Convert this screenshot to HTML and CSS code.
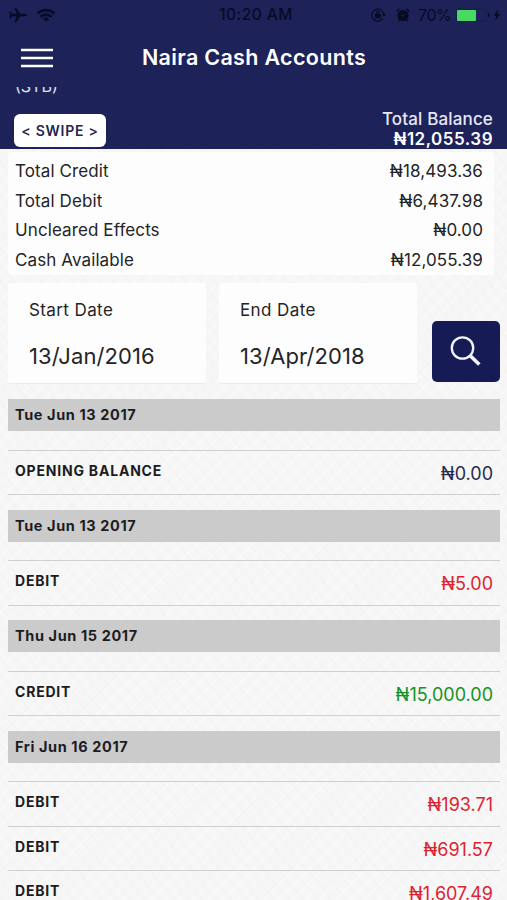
FILE: index.html
```html
<!DOCTYPE html>
<html lang="en">
<head>
<meta charset="utf-8">
<title>Naira Cash Accounts</title>
<link rel="stylesheet" href="styles.css">
</head>
<body>
<header class="top">
  <div class="status">
    <div class="status-left">
      <svg width="20" height="16" viewBox="0 0 20 16"><path d="M19 8c0-.8-1-1.200-2-1.200h-4.500L8 .8H6.300l2.200 6H4.200L2.500 4.600H1.100L2.200 8l-1.100 3.400h1.400l1.700-2.200h4.300l-2.200 6H8l4.500-6H17c1 0 2-.4 2-1.200z"/></svg>
      <svg width="20" height="14" viewBox="0 0 20 14" fill="none" stroke="#080b24" stroke-width="2.700"><path d="M1.500 5.500a12.300 12.300 0 0 1 17 0M4.600 8.900a7.700 7.700 0 0 1 10.800 0"/><path d="M10 13.800 7 11a4.300 4.300 0 0 1 6 0z" fill="#080b24" stroke="none"/></svg>
    </div>
    <span class="clock">10:20 AM</span>
    <div class="status-right">
      <svg width="16" height="14" viewBox="0 0 16 14" fill="none" stroke="#080b24" stroke-width="1.200"><path d="M12 10.200A6 6 0 1 1 12.700 6"/><path d="M11 6h4l-2.100 2.700z" fill="#080b24" stroke="none"/><path d="M4.600 6.500h4.600v3.200H4.600z" fill="#080b24"/><path d="M5.500 6V4.800a1.400 1.400 0 0 1 2.800 0V6"/></svg>
      <svg class="alarm" width="14" height="14" viewBox="0 0 14 14"><circle cx="7" cy="7.500" r="5.600"/><path d="M.6 4.500C.2 2 2 .4 4.500 1zM13.400 4.500C13.800 2 12 .4 9.500 1zM2.800 11.300l1.400 1-1.300 1.500-1-.8zM11.200 11.300l-1.400 1 1.300 1.500 1-.8z"/><path d="M9.300 5.200 7 8 5 7.300" fill="none" stroke="#1d2259" stroke-width=".8"/></svg>
      <span class="percent">70%</span>
      <svg class="battery" width="35" height="14" viewBox="0 0 35 14"><rect x=".5" y="1" width="30" height="12" rx="2" fill="none" stroke="#181c4c"/><rect x="1" y="2" width="19" height="11" rx="1" fill="#4bd763"/><path d="M32 5v4c2-.5 2-3.500 0-4z"/></svg>
      <svg width="8" height="12" viewBox="0 0 8 12"><path d="M5.500 0 .5 6.700h3L2 12l5.500-7h-3z"/></svg>
    </div>
  </div>
  <nav class="bar">
    <svg class="menu" width="32" height="20" viewBox="0 0 32 20"><path d="M0 2h32M0 10h32M0 18h32" stroke="#fff" stroke-width="2.600"/></svg>
    <h1>Naira Cash Accounts</h1>
  </nav>
  <div class="clip"><span>(STB)</span></div>
  <div class="account">
    <button class="swipe">&lt; SWIPE &gt;</button>
    <div class="balance"><span>Total Balance</span><b>₦12,055.39</b></div>
  </div>
</header>
<main>
  <dl class="summary">
    <div><dt>Total Credit</dt><dd>₦18,493.36</dd></div>
    <div><dt>Total Debit</dt><dd>₦6,437.98</dd></div>
    <div><dt>Uncleared Effects</dt><dd>₦0.00</dd></div>
    <div><dt>Cash Available</dt><dd>₦12,055.39</dd></div>
  </dl>
  <section class="filter">
    <div class="field"><label>Start Date</label><span>13/Jan/2016</span></div>
    <div class="field"><label>End Date</label><span>13/Apr/2018</span></div>
    <button class="search" aria-label="Search"><svg width="32" height="32" viewBox="0 0 32 32" fill="none" stroke="#f2f3ff"><circle cx="12.500" cy="12" r="10.700" stroke-width="2.300"/><path d="m20.500 20 8.800 8.500" stroke-width="3.600"/></svg></button>
  </section>
  <section class="group"><h2>Tue Jun 13 2017</h2><div class="rows"><div class="row"><b>OPENING BALANCE</b><span>₦0.00</span></div></div></section>
  <section class="group"><h2>Tue Jun 13 2017</h2><div class="rows"><div class="row"><b>DEBIT</b><span class="debit">₦5.00</span></div></div></section>
  <section class="group"><h2>Thu Jun 15 2017</h2><div class="rows"><div class="row"><b>CREDIT</b><span class="credit">₦15,000.00</span></div></div></section>
  <section class="group"><h2>Fri Jun 16 2017</h2><div class="rows"><div class="row"><b>DEBIT</b><span class="debit">₦193.71</span></div><div class="row"><b>DEBIT</b><span class="debit">₦691.57</span></div><div class="row"><b>DEBIT</b><span class="debit">₦1,607.49</span></div></div></section>
</main>
</body>
</html>
```
FILE: styles.css
```css
* { box-sizing: border-box; margin: 0; }
html, body { height: 900px; overflow: hidden; }
body {
  font-family: Inter, "Liberation Sans", sans-serif;
  color: #242426;
  background-color: #f6f6f6;
  background-image:
    repeating-linear-gradient(50deg, rgba(0,0,0,.006) 0 3px, transparent 3px 11px),
    repeating-linear-gradient(-45deg, rgba(255,255,255,.2) 0 3px, transparent 3px 10px);
}
svg { display: block; flex: none; }
button { border: 0; padding: 0; font-family: inherit; }
.top { height: 149px; background: #1d2259; color: #fff; overflow: hidden; }
.status { height: 29px; display: grid; grid-template-columns: 1fr auto 1fr; align-items: center; padding: 0 6px 0 8px; color: #080b24; fill: #080b24; }
.status-left, .status-right { display: flex; align-items: center; }
.status-left { gap: 8px; }
.status-right { justify-content: flex-end; }
.clock { font-size: 15.5px; font-weight: 500; letter-spacing: .45px; margin-left: 3px; }
.alarm { margin-left: 9px; }
.percent { font-size: 16px; margin-left: 8px; width: 33px; letter-spacing: -.4px; }
.battery { margin-left: 5px; margin-right: 2px; }
.bar { height: 58px; display: grid; grid-template-columns: 32px 1fr 32px; align-items: center; padding: 0 20px 0 21px; }
.bar h1 { font-size: 21.5px; font-weight: 600; text-align: center; line-height: 26px; white-space: nowrap; letter-spacing: .32px; padding-bottom: 2px; }
.clip { height: 9px; overflow: hidden; display: flex; align-items: flex-end; padding-left: 15px; font-size: 16px; line-height: 20px; color: #dfe1f5; }
.clip span { margin-bottom: 0; }
.account { display: flex; justify-content: space-between; padding: 12px 14px 0; }
.swipe { margin-top: 6px; width: 92px; height: 33px; border-radius: 6px; background: #fff; color: #24264f; font-size: 14px; font-weight: 600; letter-spacing: .75px; }
.balance { display: flex; flex-direction: column; text-align: right; padding-top: 1px; font-size: 17px; line-height: 20px; color: #e7e8f6; }
.balance span { font-weight: 500; letter-spacing: .15px; }
.balance b { font-weight: 600; color: #fff; letter-spacing: .5px; }
.summary { margin: 3px 13px 0 8px; padding: 4px 11px 0 7px; height: 123px; background: #fdfdfd; border-radius: 4px; font-size: 17px; }
.summary div { display: flex; justify-content: space-between; height: 29.6px; line-height: 30px; letter-spacing: .1px; }
.filter { display: flex; height: 101px; margin: 8px 7px 0 8px; }
.field { width: 198px; margin-right: 13px; background: #fdfdfd; padding: 16px 0 0 21px; display: flex; flex-direction: column; border-radius: 3px; border-bottom: 1px solid #ebebeb; }
.field label { font-size: 17px; line-height: 22px; letter-spacing: .4px; }
.field span { font-size: 22px; line-height: 28px; margin-top: 20.5px; letter-spacing: .08px; }
.search { margin: 38px 0 0 auto; width: 68px; height: 61px; border-radius: 5px; background: #171b55; display: grid; place-items: center; }
.group { margin: 15px 7px 0 8px; }
.group + .group { margin-top: 14.5px; }
.group h2 { height: 32px; line-height: 32px; padding-left: 7px; background: #cbcbcb; font-size: 14.5px; font-weight: 700; letter-spacing: .6px; color: #1c1c1e; }
.rows { margin-top: 18.5px; border-top: 1px solid #d0d0d0; }
.row { display: flex; justify-content: space-between; height: 44.5px; padding: 0 7px; border-bottom: 1px solid #d0d0d0; }
.row b { font-size: 14px; line-height: 40px; font-weight: 700; color: #1c1c1e; letter-spacing: .8px; }
.row span { font-size: 18px; line-height: 46px; color: #282a50; }
.row .debit { color: #dc2430; }
.row .credit { color: #159324; }
```
